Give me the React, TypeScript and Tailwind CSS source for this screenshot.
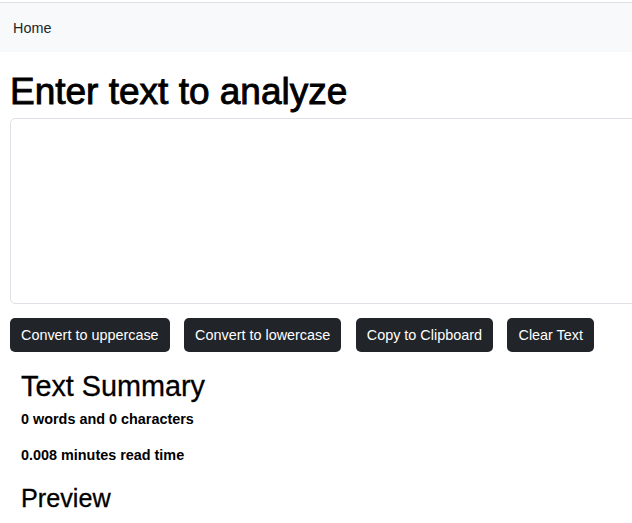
import React, { useState } from "react";

const App = () => {
  const [text, setText] = useState("");

  const words = text.split(/\s+/).filter((w) => w.length !== 0).length;
  const buttons = ["Convert to uppercase", "Convert to lowercase", "Copy to Clipboard", "Clear Text"];

  return (
    <div
      className="min-h-screen overflow-hidden bg-white text-[#212529]"
      style={{ fontFamily: '"Liberation Sans", Arial, sans-serif' }}
    >
      <nav className="mt-[2px] h-[50px] border-t border-[#dee2e6] bg-[#f8f9fa] flex items-center px-[13px] pt-[2px]">
        <span className="text-[14.4px] text-[#212529]">Home</span>
      </nav>

      <div className="pl-[10px]">
        <h1 className="mt-[18px] text-[37px] leading-[1.2] font-normal text-black [-webkit-text-stroke:0.9px_black]">
          Enter text to analyze
        </h1>
        <textarea
          value={text}
          onChange={(e) => setText(e.target.value)}
          className="mt-[4px] block w-[700px] h-[186px] rounded-[5px] border border-[#dee2e6] bg-white resize-none outline-none"
        />
        <div className="mt-[14px] flex">
          {buttons.map((b) => (
            <button
              key={b}
              className="mr-[14.5px] h-[34px] px-[11px] rounded-[5px] bg-[#212529] text-white text-[14.4px] whitespace-nowrap"
            >
              {b}
            </button>
          ))}
        </div>

        <div className="pl-[11px] mt-[17px]">
          <h2 className="text-[28.8px] leading-[1.2] font-normal text-black [-webkit-text-stroke:0.3px_black]">Text Summary</h2>
          <p className="mt-[5px] text-[14.4px] leading-[1.5] font-bold text-black">
            {words} words and {text.length} characters
          </p>
          <p className="mt-[14.4px] text-[14.4px] leading-[1.5] font-bold text-black">
            {(0.008 * words || 0.008).toString()} minutes read time
          </p>
          <h3 className="mt-[16px] text-[25.2px] leading-[1.2] font-normal text-black [-webkit-text-stroke:0.3px_black]">Preview</h3>
        </div>
      </div>
    </div>
  );
};

export default App;
